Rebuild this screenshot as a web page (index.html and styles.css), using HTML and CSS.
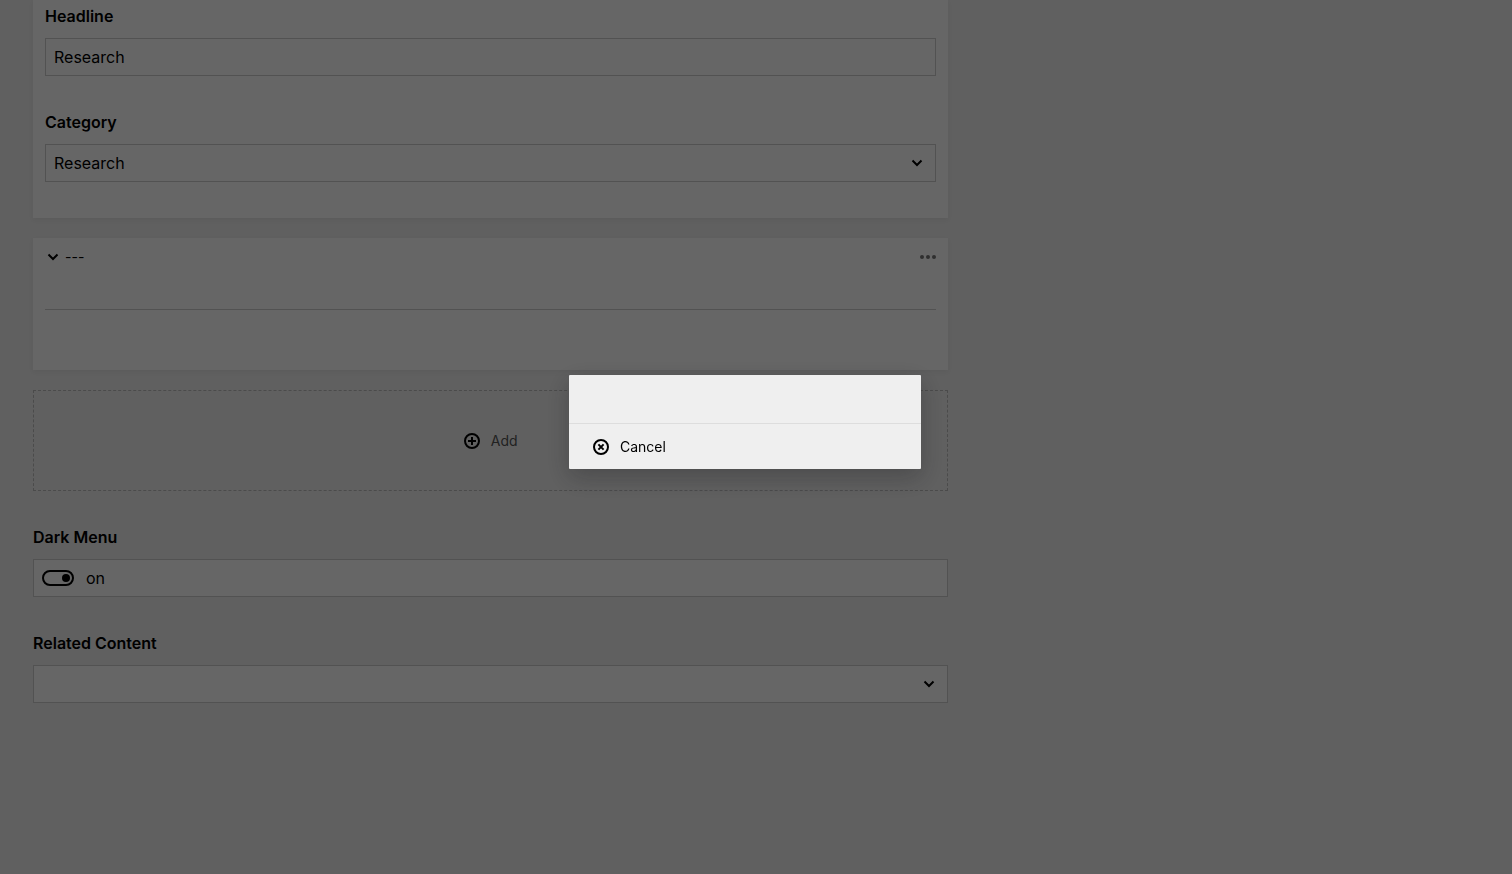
FILE: index.html
```html
<!DOCTYPE html>
<html lang="en">
<head>
  <meta charset="UTF-8">
  <meta name="viewport" content="width=device-width, initial-scale=1">
  <title>Research</title>
  <link rel="stylesheet" href="styles.css">
</head>
<body>
  <main class="page">
    <form class="form">
      <section class="card card-fields">
        <div class="field">
          <label class="label" for="headline">Headline</label>
          <input class="input" id="headline" type="text" value="Research">
        </div>
        <div class="field">
          <label class="label" for="category">Category</label>
          <div class="select-wrapper">
            <select class="input" id="category">
              <option selected>Research</option>
            </select>
            <svg class="select-arrow" width="12" height="8" viewBox="0 0 12 8"><path d="M1.5 1.5 L6 6 L10.5 1.5"/></svg>
          </div>
        </div>
      </section>

      <section class="card">
        <header class="card-header">
          <button class="card-toggle" type="button">
            <svg class="chevron" width="12" height="8" viewBox="0 0 12 8"><path d="M1.5 1.5 L6 6 L10.5 1.5"/></svg>
            <span>---</span>
          </button>
          <button class="card-options" type="button" aria-label="Options">
            <svg width="16" height="4" viewBox="0 0 16 4"><circle cx="2" cy="2" r="2"/><circle cx="8" cy="2" r="2"/><circle cx="14" cy="2" r="2"/></svg>
          </button>
        </header>
        <hr class="line">
      </section>

      <button class="add" type="button">
        <svg class="icon" width="16" height="16" viewBox="0 0 16 16"><circle cx="8" cy="8" r="7"/><path d="M8 4 V12 M4 8 H12"/></svg>
        <span>Add</span>
      </button>

      <div class="field">
        <label class="label" for="darkmenu">Dark Menu</label>
        <label class="input toggle">
          <input class="toggle-input" id="darkmenu" type="checkbox" checked>
          <span>on</span>
        </label>
      </div>
      <div class="field">
        <label class="label" for="related">Related Content</label>
        <div class="select-wrapper">
          <select class="input" id="related">
            <option selected></option>
          </select>
          <svg class="select-arrow" width="12" height="8" viewBox="0 0 12 8"><path d="M1.5 1.5 L6 6 L10.5 1.5"/></svg>
        </div>
      </div>
    </form>
  </main>

  <div class="overlay">
    <div class="dialog" role="dialog" aria-modal="true">
      <div class="dialog-body"></div>
      <footer class="dialog-footer">
        <button class="dialog-button" type="button">
          <svg class="icon" width="16" height="16" viewBox="0 0 16 16"><circle cx="8" cy="8" r="7"/><path d="M5.4 5.4 L10.6 10.6 M10.6 5.4 L5.4 10.6"/></svg>
          <span>Cancel</span>
        </button>
      </footer>
    </div>
  </div>
</body>
</html>
```

FILE: styles.css
```css
* {
  box-sizing: border-box;
  margin: 0;
  padding: 0;
}
body {
  font-family: Inter, "Liberation Sans", sans-serif;
  font-size: 16px;
  line-height: 24px;
  color: #000;
  background: #efefef;
}
button, input, select {
  font: inherit;
  color: inherit;
}
button {
  background: none;
  border: 0;
  cursor: pointer;
}
svg {
  display: block;
  flex-shrink: 0;
}

/* Page */
.page {
  display: grid;
  grid-template-columns: 2fr 1fr;
  gap: 73px;
  padding: 0 33px;
}
.form {
  display: flex;
  flex-direction: column;
  min-width: 0;
}

/* Cards */
.card {
  background: #fff;
  padding: 4px 12px 60px;
  margin-bottom: 20px;
  box-shadow: 0 2px 5px rgba(22, 23, 26, 0.05);
}
.card-fields {
  padding-bottom: 36px;
}
.card-header {
  display: flex;
  justify-content: space-between;
  align-items: center;
  height: 30px;
}
.card-toggle {
  display: flex;
  align-items: center;
  gap: 6px;
  padding-left: 2px;
  font-size: 14px;
}
.card-options {
  padding: 6px 0;
}
.card-options svg {
  fill: #777;
}
.line {
  border: 0;
  border-top: 1px solid #ccc;
  margin-top: 37px;
}

/* Fields */
.field + .field,
.add + .field {
  margin-top: 34px;
}
.label {
  display: block;
  font-weight: 600;
  margin-bottom: 10px;
}
.input {
  display: block;
  width: 100%;
  height: 38px;
  padding: 0 8px;
  background: #fff;
  border: 1px solid #ccc;
  border-radius: 0;
  appearance: none;
}
.select-wrapper {
  display: grid;
  align-items: center;
}
.select-wrapper > * {
  grid-area: 1 / 1;
}
.select-arrow {
  justify-self: end;
  margin-right: 13px;
  pointer-events: none;
}
.select-arrow,
.chevron {
  fill: none;
  stroke: #000;
  stroke-width: 2;
}
.toggle {
  display: flex;
  align-items: center;
  gap: 12px;
}
.toggle-input {
  appearance: none;
  display: flex;
  justify-content: flex-end;
  align-items: center;
  width: 32px;
  height: 16px;
  padding: 0 2px;
  border: 2px solid #000;
  border-radius: 8px;
}
.toggle-input::before {
  content: "";
  width: 8px;
  height: 8px;
  border-radius: 50%;
  background: #000;
}
.toggle-input:not(:checked) {
  justify-content: flex-start;
}

/* Buttons */
.icon {
  fill: none;
  stroke: #000;
  stroke-width: 2;
}
.add {
  display: flex;
  justify-content: center;
  align-items: center;
  gap: 11px;
  height: 101px;
  border: 1px dashed #bbb;
  font-size: 14px;
  color: #555;
}

/* Dialog */
.overlay {
  position: fixed;
  inset: 0;
  display: flex;
  justify-content: center;
  align-items: center;
  padding: 0 22px 30px 0;
  background: rgba(0, 0, 0, 0.6);
}
.dialog {
  width: 352px;
  background: #efefef;
  border-radius: 1px;
  box-shadow: 0 8px 24px rgba(22, 23, 26, 0.3);
}
.dialog-body {
  height: 48px;
}
.dialog-footer {
  border-top: 1px solid #ddd;
}
.dialog-button {
  display: flex;
  align-items: center;
  gap: 11px;
  padding: 0 24px;
  height: 45px;
  font-size: 14px;
}
```
